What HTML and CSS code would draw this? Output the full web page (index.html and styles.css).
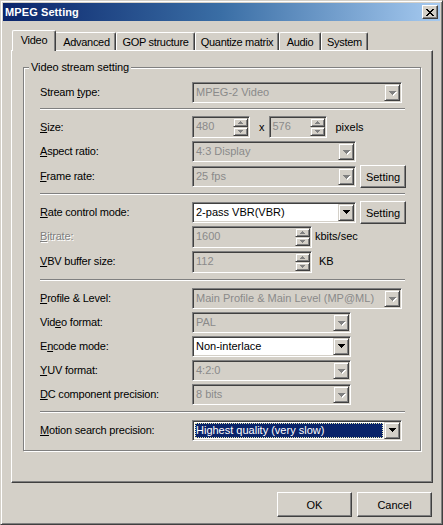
FILE: index.html
```html
<!DOCTYPE html>
<html>
<head>
<meta charset="utf-8">
<title>MPEG Setting</title>
<link rel="stylesheet" href="styles.css">
</head>
<body>
<div class="window">
  <div class="titlebar">
    <span class="title">MPEG Setting</span>
    <span class="close"><svg width="8" height="7" viewBox="0 0 8 7" shape-rendering="crispEdges"><path d="M0 0h2v1H0z M6 0h2v1H6z M1 1h2v1H1z M5 1h2v1H5z M2 2h4v1H2z M3 3h2v1H3z M2 4h4v1H2z M1 5h2v1H1z M5 5h2v1H5z M0 6h2v1H0z M6 6h2v1H6z" fill="#000"/></svg></span>
  </div>
  <div class="client">
    <div class="tabs">
      <div class="tab sel t-video">Video</div>
      <div class="tab t-adv">Advanced</div>
      <div class="tab t-gop">GOP structure</div>
      <div class="tab t-qm">Quantize matrix</div>
      <div class="tab t-audio">Audio</div>
      <div class="tab t-sys">System</div>
    </div>
    <div class="panel">
      <div class="group">
        <span class="legend">Video stream setting</span>

        <div class="row">
          <span class="lbl">Stream <u>t</u>ype:</span>
          <div class="combo dis w-wide"><span class="val">MPEG-2 Video</span><span class="drop"><svg width="8" height="5" viewBox="0 0 8 5" shape-rendering="crispEdges"><path class="sh" transform="translate(1 1)" d="M0 0h7v1h-1v1h-1v1h-1v1h-1v-1h-1v-1h-1v-1h-1z"/><path class="ar" d="M0 0h7v1h-1v1h-1v1h-1v1h-1v-1h-1v-1h-1v-1h-1z"/></svg></span></div>
        </div>
        <div class="sep s1"></div>

        <div class="sect s-a">
          <div class="row tall">
            <span class="lbl"><u>S</u>ize:</span>
            <div class="spin dis w-size"><span class="val">480</span><span class="ud"><span class="ub"><svg width="5" height="3" viewBox="0 0 5 3" shape-rendering="crispEdges"><path d="M2 0h1v1h1v1h1v1H0V2h1V1h1z"/></svg></span><span class="ub"><svg width="5" height="3" viewBox="0 0 5 3" shape-rendering="crispEdges"><path d="M0 0h5v1h-1v1h-1v1H2V2H1V1H0z"/></svg></span></span></div>
            <span class="txt t-x">x</span>
            <div class="spin dis w-size"><span class="val">576</span><span class="ud"><span class="ub"><svg width="5" height="3" viewBox="0 0 5 3" shape-rendering="crispEdges"><path d="M2 0h1v1h1v1h1v1H0V2h1V1h1z"/></svg></span><span class="ub"><svg width="5" height="3" viewBox="0 0 5 3" shape-rendering="crispEdges"><path d="M0 0h5v1h-1v1h-1v1H2V2H1V1H0z"/></svg></span></span></div>
            <span class="txt t-px">pixels</span>
          </div>
          <div class="row">
            <span class="lbl"><u>A</u>spect ratio:</span>
            <div class="combo dis w-mid"><span class="val">4:3 Display</span><span class="drop"><svg width="8" height="5" viewBox="0 0 8 5" shape-rendering="crispEdges"><path class="sh" transform="translate(1 1)" d="M0 0h7v1h-1v1h-1v1h-1v1h-1v-1h-1v-1h-1v-1h-1z"/><path class="ar" d="M0 0h7v1h-1v1h-1v1h-1v1h-1v-1h-1v-1h-1v-1h-1z"/></svg></span></div>
          </div>
          <div class="row">
            <span class="lbl"><u>F</u>rame rate:</span>
            <div class="combo dis w-mid"><span class="val">25 fps</span><span class="drop"><svg width="8" height="5" viewBox="0 0 8 5" shape-rendering="crispEdges"><path class="sh" transform="translate(1 1)" d="M0 0h7v1h-1v1h-1v1h-1v1h-1v-1h-1v-1h-1v-1h-1z"/><path class="ar" d="M0 0h7v1h-1v1h-1v1h-1v1h-1v-1h-1v-1h-1v-1h-1z"/></svg></span></div>
            <span class="btn small">Setting</span>
          </div>
        </div>
        <div class="sep s2"></div>

        <div class="sect s-b">
          <div class="row">
            <span class="lbl"><u>R</u>ate control mode:</span>
            <div class="combo en w-mid"><span class="val">2-pass VBR(VBR)</span><span class="drop"><svg width="8" height="5" viewBox="0 0 8 5" shape-rendering="crispEdges"><path class="ar" d="M0 0h7v1h-1v1h-1v1h-1v1h-1v-1h-1v-1h-1v-1h-1z"/></svg></span></div>
            <span class="btn small">Setting</span>
          </div>
          <div class="row">
            <span class="lbl disabled"><u>B</u>itrate:</span>
            <div class="spin dis w-long"><span class="val">1600</span><span class="ud"><span class="ub"><svg width="5" height="3" viewBox="0 0 5 3" shape-rendering="crispEdges"><path d="M2 0h1v1h1v1h1v1H0V2h1V1h1z"/></svg></span><span class="ub"><svg width="5" height="3" viewBox="0 0 5 3" shape-rendering="crispEdges"><path d="M0 0h5v1h-1v1h-1v1H2V2H1V1H0z"/></svg></span></span></div>
            <span class="txt t-kb">kbits/sec</span>
          </div>
          <div class="row">
            <span class="lbl"><u>V</u>BV buffer size:</span>
            <div class="spin dis w-long"><span class="val">112</span><span class="ud"><span class="ub"><svg width="5" height="3" viewBox="0 0 5 3" shape-rendering="crispEdges"><path d="M2 0h1v1h1v1h1v1H0V2h1V1h1z"/></svg></span><span class="ub"><svg width="5" height="3" viewBox="0 0 5 3" shape-rendering="crispEdges"><path d="M0 0h5v1h-1v1h-1v1H2V2H1V1H0z"/></svg></span></span></div>
            <span class="txt t-k">KB</span>
          </div>
        </div>
        <div class="sep s3"></div>

        <div class="sect s-c">
          <div class="row">
            <span class="lbl"><u>P</u>rofile &amp; Level:</span>
            <div class="combo dis w-wide"><span class="val">Main Profile &amp; Main Level (MP@ML)</span><span class="drop"><svg width="8" height="5" viewBox="0 0 8 5" shape-rendering="crispEdges"><path class="sh" transform="translate(1 1)" d="M0 0h7v1h-1v1h-1v1h-1v1h-1v-1h-1v-1h-1v-1h-1z"/><path class="ar" d="M0 0h7v1h-1v1h-1v1h-1v1h-1v-1h-1v-1h-1v-1h-1z"/></svg></span></div>
          </div>
          <div class="row">
            <span class="lbl">Vid<u>e</u>o format:</span>
            <div class="combo dis w-short"><span class="val">PAL</span><span class="drop"><svg width="8" height="5" viewBox="0 0 8 5" shape-rendering="crispEdges"><path class="sh" transform="translate(1 1)" d="M0 0h7v1h-1v1h-1v1h-1v1h-1v-1h-1v-1h-1v-1h-1z"/><path class="ar" d="M0 0h7v1h-1v1h-1v1h-1v1h-1v-1h-1v-1h-1v-1h-1z"/></svg></span></div>
          </div>
          <div class="row">
            <span class="lbl">E<u>n</u>code mode:</span>
            <div class="combo en w-short"><span class="val">Non-interlace</span><span class="drop"><svg width="8" height="5" viewBox="0 0 8 5" shape-rendering="crispEdges"><path class="ar" d="M0 0h7v1h-1v1h-1v1h-1v1h-1v-1h-1v-1h-1v-1h-1z"/></svg></span></div>
          </div>
          <div class="row">
            <span class="lbl"><u>Y</u>UV format:</span>
            <div class="combo dis w-short"><span class="val">4:2:0</span><span class="drop"><svg width="8" height="5" viewBox="0 0 8 5" shape-rendering="crispEdges"><path class="sh" transform="translate(1 1)" d="M0 0h7v1h-1v1h-1v1h-1v1h-1v-1h-1v-1h-1v-1h-1z"/><path class="ar" d="M0 0h7v1h-1v1h-1v1h-1v1h-1v-1h-1v-1h-1v-1h-1z"/></svg></span></div>
          </div>
          <div class="row">
            <span class="lbl"><u>D</u>C component precision:</span>
            <div class="combo dis w-short"><span class="val">8 bits</span><span class="drop"><svg width="8" height="5" viewBox="0 0 8 5" shape-rendering="crispEdges"><path class="sh" transform="translate(1 1)" d="M0 0h7v1h-1v1h-1v1h-1v1h-1v-1h-1v-1h-1v-1h-1z"/><path class="ar" d="M0 0h7v1h-1v1h-1v1h-1v1h-1v-1h-1v-1h-1v-1h-1z"/></svg></span></div>
          </div>
        </div>
        <div class="sep s4"></div>

        <div class="row last">
          <span class="lbl"><u>M</u>otion search precision:</span>
          <div class="combo en focus w-wide"><span class="val hl">Highest quality (very slow)</span><span class="drop"><svg width="8" height="5" viewBox="0 0 8 5" shape-rendering="crispEdges"><path class="ar" d="M0 0h7v1h-1v1h-1v1h-1v1h-1v-1h-1v-1h-1v-1h-1z"/></svg></span></div>
        </div>
      </div>
    </div>
    <div class="buttons">
      <span class="btn big">OK</span>
      <span class="btn big">Cancel</span>
    </div>
  </div>
</div>
</body>
</html>
```

FILE: styles.css
```css
* { box-sizing: border-box; }
html, body { margin: 0; padding: 0; }
body {
  width: 443px;
  height: 525px;
  overflow: hidden;
  background: #d4d0c8;
  font-family: "Liberation Sans", Arial, sans-serif;
  font-size: 11px;
  color: #000;
}

.window {
  width: 443px;
  height: 525px;
  border: 1px solid;
  border-color: #d4d0c8 #404040 #404040 #d4d0c8;
  box-shadow: inset 1px 1px 0 #fff, inset -1px -1px 0 #808080;
  padding: 2px;
  display: flex;
  flex-direction: column;
  background: #d4d0c8;
}

/* title bar */
.titlebar {
  height: 18px;
  flex: none;
  display: flex;
  align-items: center;
  padding: 0 2px 0 2px;
  background: linear-gradient(to right, #0a246a 0%, #3a6ea5 50%, #a6caf0 100%);
}
.title {
  color: #fff;
  font-weight: bold;
  font-size: 11px;
  letter-spacing: 0.1px;
}
.close {
  margin-left: auto;
  width: 16px;
  height: 14px;
  display: flex;
  align-items: center;
  justify-content: center;
  background: #d4d0c8;
  border: 1px solid;
  border-color: #fff #404040 #404040 #fff;
  box-shadow: inset -1px -1px 0 #808080;
}

/* client */
.client {
  flex: 1;
  display: flex;
  flex-direction: column;
}

.tabs {
  margin-top: 9px;
  height: 20px;
  flex: none;
  display: flex;
  align-items: flex-end;
  padding-left: 11px;
}
.tab {
  flex: none;
  height: 18px;
  padding: 1px 0 0;
  line-height: 16px;
  text-align: center;
  letter-spacing: -0.3px;
  background: #d4d0c8;
  border-top: 1px solid #fff;
  border-left: 1px solid #fff;
  border-right: 1px solid #404040;
  box-shadow: inset -1px 0 0 #808080;
  border-radius: 2px 2px 0 0;
  white-space: nowrap;
}
.tab.sel {
  height: 21px;
  margin: 0 -2px -1px;
  position: relative;
  z-index: 2;
}
.t-video { width: 44px; }
.t-adv { width: 62px; padding-left: 3px !important; }
.t-gop { width: 79px; }
.t-qm { width: 84px; }
.t-audio { width: 42px; }
.t-sys { width: 47px; }

.panel {
  margin-left: 8px;
  width: 422px;
  height: 433px;
  flex: none;
  border: 1px solid;
  border-color: #fff #404040 #404040 #fff;
  box-shadow: inset -1px -1px 0 #808080;
  padding: 16px 11px 0 11px;
}

.group {
  position: relative;
  border: 1px solid #808080;
  box-shadow: inset 1px 1px 0 #fff, 1px 1px 0 #fff;
  padding: 14px 15px 9px 16px;
}
.legend {
  position: absolute;
  top: -7px;
  left: 5px;
  padding: 0 2px;
  line-height: 13px;
  letter-spacing: -0.1px;
  background: #d4d0c8;
}

.row {
  height: 21px;
  display: flex;
  align-items: center;
}
.row.tall { height: 22px; }
.sect { display: flex; flex-direction: column; }
.s-a { gap: 3px; }
.s-a .row + .row + .row { margin-top: 1px; }
.s-b { gap: 3px; }
.s-b .row + .row + .row { margin-top: 1px; }
.s-c { gap: 3px; }

.sep {
  height: 2px;
  border-top: 1px solid #808080;
  border-bottom: 1px solid #fff;
}
.s1 { margin: 5px 0 6px; }
.s2 { margin: 6px 0 7px; }
.s3 { margin: 7px 0 7px; }
.s4 { margin: 6px 0 7px; }

.lbl {
  width: 152px;
  flex: none;
  white-space: nowrap;
  letter-spacing: -0.2px;
  padding-bottom: 1px;
}
.lbl.disabled {
  color: #808080;
  text-shadow: 1px 1px 0 #fff;
}

/* combo boxes */
.combo, .spin {
  flex: none;
  height: 21px;
  display: flex;
  padding: 1px;
  border: 1px solid;
  border-color: #808080 #fff #fff #808080;
  box-shadow: inset 1px 1px 0 #404040, inset -1px -1px 0 #d4d0c8;
}
.spin { height: 22px; }
.combo.dis, .spin.dis { background: #d4d0c8; }
.combo.en { background: #fff; }
.val {
  flex: 1;
  min-width: 0;
  padding-left: 2px;
  line-height: 16px;
  white-space: nowrap;
  overflow: hidden;
}
.spin .val { line-height: 17px; }
.dis .val { color: #8a8a8a; }
.val.hl {
  margin: 1px;
  padding-left: 1px;
  line-height: 14px;
  background: #0a246a;
  color: #fff;
  outline: 1px dotted #e8e8b0;
  outline-offset: -1px;
}
.drop {
  width: 16px;
  height: 17px;
  flex: none;
  display: flex;
  align-items: center;
  justify-content: center;
  background: #d4d0c8;
  border: 1px solid;
  border-color: #d4d0c8 #404040 #404040 #d4d0c8;
  box-shadow: inset 1px 1px 0 #fff, inset -1px -1px 0 #808080;
}
.drop svg { display: block; margin-left: 1px; margin-top: 1px; }
.en .drop svg { margin-top: 0; }
.sh { fill: #fff; }
.dis .ar { fill: #808080; }
.en .ar { fill: #000; }

.w-wide { width: 210px; }
.w-mid { width: 164px; }
.w-short { width: 159px; }
.w-size { width: 58px; }
.w-long { width: 120px; }

.ud {
  width: 15px;
  flex: none;
  display: flex;
  flex-direction: column;
}
.ub {
  height: 9px;
  display: flex;
  align-items: center;
  justify-content: center;
  background: #d4d0c8;
  border: 1px solid;
  border-color: #d4d0c8 #404040 #404040 #d4d0c8;
  box-shadow: inset 1px 1px 0 #fff, inset -1px -1px 0 #808080;
}
.ub svg { display: block; fill: #808080; }

.txt { white-space: nowrap; padding-bottom: 1px; }
.t-x { margin: 0 4px 0 9px; }
.t-px { margin-left: 9px; }
.t-kb { margin-left: 3px; }
.t-k { margin-left: 7px; }

/* buttons */
.btn {
  display: flex;
  align-items: center;
  justify-content: center;
  flex: none;
  background: #d4d0c8;
  border: 1px solid;
  border-color: #fff #404040 #404040 #fff;
  box-shadow: inset -1px -1px 0 #808080;
}
.btn.small {
  width: 46px;
  height: 23px;
  margin-left: 4px;
}
.buttons {
  margin-top: 9px;
  display: flex;
  justify-content: flex-end;
  gap: 5px;
  padding-right: 8px;
}
.btn.big {
  width: 75px;
  height: 25px;
}
```
